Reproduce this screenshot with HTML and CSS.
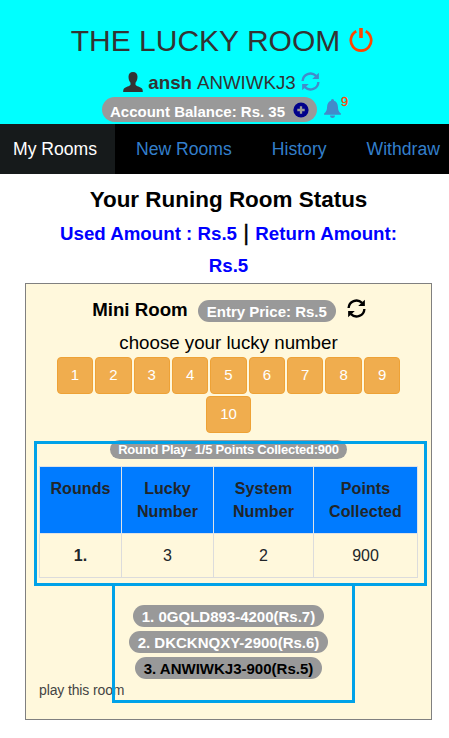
FILE: index.html
```
<!DOCTYPE html>
<html lang="en">
<head>
<meta charset="utf-8">
<title>The Lucky Room</title>
<link rel="stylesheet" href="styles.css">
</head>
<body>
<svg class="defs" width="0" height="0" aria-hidden="true">
  <symbol id="refresh" viewBox="0 0 20 20">
    <path d="M1.700 9.500A8.300 8.300 0 0 1 15.800 4M18.300 10.500A8.300 8.300 0 0 1 4.200 16" fill="none" stroke="currentColor" stroke-width="2.500"/>
    <path d="M18.800.8V7.400H11.800ZM1.200 19.200V12.600H8.200Z" fill="currentColor"/>
  </symbol>
</svg>
<header class="top">
  <h1 class="brand">THE LUCKY ROOM
    <svg class="power" viewBox="0 0 24 24"><path d="M7.300 3.300A10.200 10.200 0 1 0 16.700 3.300" fill="none" stroke="currentColor" stroke-width="2.700"/><path d="M10.200 0h3.600v10h-3.600z" fill="currentColor"/></svg>
  </h1>
  <div class="user">
    <svg class="person" viewBox="0 0 20 20"><path d="M10 0C7.200 0 5.500 1.800 5.500 4.800c0 2.300.8 4.700 2 6v2C6.800 14.200 2.500 15 1 16.500.3 17.200.2 18.500.2 20h19.600c0-1.500-.1-2.800-.8-3.500-1.500-1.500-5.800-2.300-6.500-3.700v-2c1.200-1.300 2-3.700 2-6C14.500 1.800 12.800 0 10 0Z" fill="currentColor"/></svg>
    <b>ansh</b><span>ANWIWKJ3</span>
    <svg class="refresh blue"><use href="#refresh"/></svg>
  </div>
  <div class="account">
    <span class="pill balance">Account Balance: Rs. 35
      <svg class="plus" viewBox="0 0 16 16"><circle cx="8" cy="8" r="7.600" fill="#00008b"/><path d="M8 4.300v7.400M4.300 8h7.400" stroke="#999" stroke-width="2.300"/></svg>
    </span>
    <svg class="bell" viewBox="0 0 17 19"><path d="M8.500 0c1 0 1.500.7 1.500 1.800 2.600.7 3.800 3 3.900 6 .1 3.500.9 5.200 3 6.700v1.200H.1v-1.200c2.100-1.500 2.900-3.200 3-6.700.1-3 1.300-5.300 3.900-6C7 .7 7.500 0 8.500 0ZM6 16.500h5C10.800 18.300 9.800 19 8.500 19S6.200 18.300 6 16.500Z" fill="currentColor"/></svg>
    <span class="count">9</span>
  </div>
</header>
<nav class="nav">
  <a class="active">My Rooms</a><a>New Rooms</a><a>History</a><a>Withdraw</a>
</nav>
<main>
  <h2 class="status">Your Runing Room Status</h2>
  <div class="amounts"><b>Used Amount : Rs.5</b> <span>|</span> <b>Return Amount: Rs.5</b></div>
  <section class="card">
    <div class="room">
      <b>Mini Room</b>
      <span class="pill">Entry Price: Rs.5</span>
      <svg class="refresh"><use href="#refresh"/></svg>
    </div>
    <div class="choose">choose your lucky number</div>
    <div class="numbers">
      <button>1</button><button>2</button><button>3</button><button>4</button><button>5</button><button>6</button><button>7</button><button>8</button><button>9</button><button>10</button>
    </div>
    <div class="round"><span class="pill small">Round Play- 1/5 Points Collected:900</span></div>
    <table>
      <colgroup><col class="c1"><col class="c2"><col class="c3"><col class="c4"></colgroup>
      <thead><tr><th>Rounds</th><th>Lucky Number</th><th>System Number</th><th>Points Collected</th></tr></thead>
      <tbody><tr><td><b>1.</b></td><td>3</td><td>2</td><td>900</td></tr></tbody>
    </table>
    <div class="ranks">
      <span class="pill">1. 0GQLD893-4200(Rs.7)</span>
      <span class="pill">2. DKCKNQXY-2900(Rs.6)</span>
      <span class="pill me">3. ANWIWKJ3-900(Rs.5)</span>
    </div>
    <div class="play">play this room</div>
    <div class="mark mark-table"></div>
    <div class="mark mark-ranks"></div>
  </section>
</main>
</body>
</html>
```
FILE: styles.css
```
* { box-sizing: border-box; }
body {
  margin: 0;
  background: #fff;
  color: #000;
  font-family: "Liberation Sans", Arial, sans-serif;
  font-size: 18.72px;
  overflow: hidden;
}
svg { display: block; flex: none; }
.defs { position: absolute; }
.top {
  height: 124px;
  padding-top: 20px;
  background: #0ff;
  color: #333;
}
.brand {
  display: flex;
  justify-content: center;
  align-items: center;
  gap: 9px;
  height: 41px;
  margin: 0;
  padding-right: 5px;
  font-size: 30px;
  font-weight: 400;
}
.power { width: 24px; height: 24px; color: #ff4500; margin-top: -2px; }
.user {
  display: flex;
  justify-content: center;
  align-items: center;
  height: 30px;
  margin-top: 6px;
  padding: 1px 6px 0 0;
}
.user b { margin: 0 5px; }
.person { width: 20px; height: 20px; margin-top: -2px; }
.refresh { width: 19px; height: 19px; }
.user .blue { color: #428bca; margin: -2px 0 0 5px; }
.account { display: flex; height: 25px; padding-left: 102px; }
.pill {
  display: inline-flex;
  align-items: center;
  height: 22px;
  padding: 0 9px;
  border-radius: 11px;
  background: #999;
  color: #fff;
  font-size: 15px;
  font-weight: 700;
  line-height: 1;
  white-space: nowrap;
}
.balance { width: 215px; height: 25px; border-radius: 13px; padding: 4px 8px 0; justify-content: space-between; }
.plus { width: 16px; height: 16px; margin-top: -3px; }
.bell { width: 17px; height: 19px; margin: 2px 0 0 7px; color: #428bca; }
.count { color: #ff4500; font-size: 13px; line-height: 1; margin: -2px 0 0; -webkit-text-stroke: 0.300px #ff4500; }
.nav { display: flex; height: 50px; background: #000; font-size: 17.6px; line-height: 50px; white-space: nowrap; }
.nav a { flex: none; color: #337fcb; padding-left: 21px; padding-right: 19px; }
.nav .active { width: 115px; padding: 0 0 0 13px; background: #161a1b; color: #fff; }
.status { height: 43px; margin: 0; padding: 10px 0 0 8px; text-align: center; font-size: 22.46px; line-height: 32px; }
.amounts {
  width: 407px;
  margin: 0 0 0 25px;
  padding: 0 20px;
  height: 66px;
  text-align: center;
  font-size: 22.46px;
  line-height: 32px;
}
.amounts b { color: #00f; font-size: 18.72px; line-height: 30px; }
.amounts span { -webkit-text-stroke: 0.400px #000; }
.card {
  position: relative;
  width: 407px;
  height: 437px;
  margin-left: 25px;
  border: 1px solid #808080;
  background: #fff8dc;
}
.room { display: flex; justify-content: center; align-items: center; height: 24px; margin-top: 14px; padding-left: 1px; }
.room .pill { margin: 2px 11px 0 10px; }
.room .refresh { margin-top: -3px; }
.choose { height: 24px; margin-top: 9px; line-height: 24px; text-align: center; }
.numbers { display: flex; flex-wrap: wrap; justify-content: center; gap: 2px; width: 360px; margin: 2px 0 0 22.500px; }
.numbers button {
  height: 37px;
  padding: 0 12.900px 2px;
  border: 1px solid #eea236;
  border-radius: 4px;
  background: #f0ad4e;
  color: #fff;
  font: 15px/1 "Liberation Sans", Arial, sans-serif;
  min-width: 36.400px;
}
.round { display: flex; justify-content: center; height: 33px; padding-top: 7px; }
.small { height: 19px; padding: 0 8px 1px; font-size: 13px; border-radius: 10px; letter-spacing: -0.230px; }
table { width: 379px; margin-left: 13px; border-collapse: collapse; table-layout: fixed; font-size: 16px; color: #212529; }
.c1 { width: 82px; }
.c2 { width: 92px; }
.c3 { width: 100px; }
.c4 { width: 104px; }
th, td { border: 1px solid #dee2e6; text-align: center; letter-spacing: 0.100px; }
th { height: 67px; padding: 10px 8px 9px; background: #007bff; vertical-align: top; line-height: 23px; }
td { height: 44px; padding: 0; border-color: #dcdcdc; letter-spacing: 0; }
.ranks { display: flex; flex-direction: column; align-items: center; gap: 4px; margin-top: 27px; }
.ranks .pill { padding-top: 1px; }
.ranks .me { color: #000; }
.play { margin: 2px 0 0 13px; font-size: 14px; line-height: 18px; color: #444; letter-spacing: -0.130px; }
.mark { position: absolute; border: 3px solid #00a2e8; }
.mark-table { left: 8px; top: 157px; width: 393px; height: 145px; }
.mark-ranks { left: 86px; top: 299px; width: 243px; height: 120px; }
```
